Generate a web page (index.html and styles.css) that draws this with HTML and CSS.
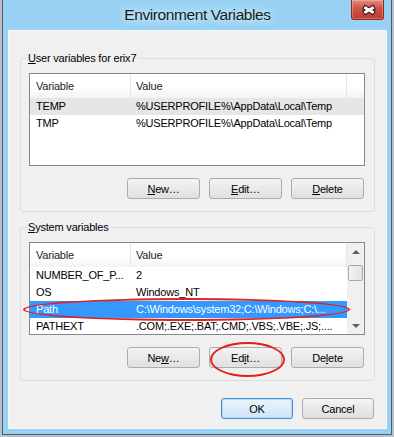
FILE: index.html
```html
<!DOCTYPE html>
<html lang="en">
<head>
    <meta charset="UTF-8">
    <title>Environment Variables</title>
    <link rel="stylesheet" href="styles.css">
</head>
<body>
    <div class="window">
        <div class="titlebar">
            <h1 class="title">Environment Variables</h1>
            <button class="close" type="button" aria-label="Close">
                <svg width="33" height="20" viewBox="0 0 33 20">
                    <path d="M14.5 9 L21.5 13 M21.5 9 L14.5 13" stroke="#3b1714" stroke-width="5" stroke-linecap="square" fill="none"/>
                    <path d="M14.5 9 L21.5 13 M21.5 9 L14.5 13" stroke="#fff" stroke-width="2.8" stroke-linecap="square" fill="none"/>
                </svg>
            </button>
        </div>

        <div class="client">
            <fieldset class="group">
                <legend><u>U</u>ser variables for erix7</legend>
                <div class="list">
                    <div class="list-main">
                        <div class="list-head cols cols-wide">
                            <div class="cell">Variable</div>
                            <div class="cell">Value</div>
                            <div class="cell"></div>
                        </div>
                        <div class="row cols sel-idle">
                            <div class="cell">TEMP</div>
                            <div class="cell">%USERPROFILE%\AppData\Local\Temp</div>
                        </div>
                        <div class="row cols">
                            <div class="cell">TMP</div>
                            <div class="cell">%USERPROFILE%\AppData\Local\Temp</div>
                        </div>
                    </div>
                </div>
                <div class="btn-row">
                    <button class="btn" type="button"><u>N</u>ew…</button>
                    <button class="btn" type="button"><u>E</u>dit…</button>
                    <button class="btn" type="button"><u>D</u>elete</button>
                </div>
            </fieldset>

            <fieldset class="group">
                <legend><u>S</u>ystem variables</legend>
                <div class="list">
                    <div class="list-main">
                        <div class="list-head cols">
                            <div class="cell">Variable</div>
                            <div class="cell">Value</div>
                        </div>
                        <div class="row cols">
                            <div class="cell">NUMBER_OF_P...</div>
                            <div class="cell">2</div>
                        </div>
                        <div class="row cols">
                            <div class="cell">OS</div>
                            <div class="cell">Windows_NT</div>
                        </div>
                        <div class="row cols sel">
                            <div class="cell">Path</div>
                            <div class="cell">C:\Windows\system32;C:\Windows;C:\...</div>
                        </div>
                        <div class="row cols">
                            <div class="cell">PATHEXT</div>
                            <div class="cell">.COM;.EXE;.BAT;.CMD;.VBS;.VBE;.JS;....</div>
                        </div>
                    </div>
                    <div class="scrollbar">
                        <div class="sb-btn"><span class="arrow-up"></span></div>
                        <div class="sb-track"><div class="sb-thumb"></div></div>
                        <div class="sb-btn"><span class="arrow-down"></span></div>
                    </div>
                </div>
                <div class="btn-row">
                    <button class="btn" type="button">Ne<u>w</u>…</button>
                    <button class="btn" type="button">Ed<u>i</u>t…</button>
                    <button class="btn" type="button">De<u>l</u>ete</button>
                </div>
            </fieldset>

            <div class="dialog-buttons">
                <button class="btn btn-default" type="button">OK</button>
                <button class="btn" type="button">Cancel</button>
            </div>

            <!-- red annotation rings drawn over the dialog -->
            <div class="mark mark-path"></div>
            <div class="mark mark-edit"></div>
        </div>
    </div>
</body>
</html>
```

FILE: styles.css
```css
body {
    margin: 0;
    background-color: #b9c0c6;
    font-family: "Liberation Sans", Arial, sans-serif;
    font-size: 11px;
    letter-spacing: -0.2px;
    color: #000;
}
.window {
    box-sizing: border-box;
    width: 390px;
    height: 435px;
    margin-left: 2px;
    padding: 0 4px 5px 5px;
    background-color: #98d1f3;
    border: 1px solid #4f5d6a;
    border-top: 0;
    display: flex;
    flex-direction: column;
}
.titlebar {
    height: 30px;
    flex-shrink: 0;
    display: grid;
    grid-template-columns: 1fr auto 1fr;
    align-items: start;
}
.title {
    grid-column: 2;
    margin: 0;
    font-size: 15.5px;
    font-weight: normal;
    line-height: 30px;
    letter-spacing: -0.4px;
    color: #1b1b1b;
    text-shadow: 0 0 6px #d9effc, 0 0 10px #d9effc;
}
.close {
    grid-column: 3;
    justify-self: end;
    margin-right: 3px;
    width: 33px;
    height: 20px;
    padding: 0;
    border: 1px solid #8d2a22;
    border-top: 0;
    border-radius: 0 0 3px 3px;
    background: linear-gradient(#e48a80, #cf5247 45%, #c23a30);
    box-shadow: inset 0 0 0 1px rgba(255, 255, 255, 0.25);
}
.close svg {
    display: block;
    margin: -1px 0 0 -1px;
}
.client {
    position: relative;
    flex: 1;
    background-color: #f0f0f0;
    padding: 21px 12px 0;
    display: flex;
    flex-direction: column;
    box-shadow: inset 0 0 0 1px #f7f7f7;
}
.group {
    margin: 0;
    padding: 8px 9px 12px 8px;
    min-width: 0;
    border: 1px solid #d5dfe5;
    border-radius: 3px;
}
.group + .group {
    margin-top: 8px;
}
.group legend {
    padding: 0 2px;
    margin-left: -3px;
    line-height: 14px;
}
.list {
    box-sizing: border-box;
    height: 93px;
    border: 1px solid #828790;
    background-color: #fff;
    display: flex;
    overflow: hidden;
}
.list-main {
    flex: 1;
    min-width: 0;
}
.cols {
    display: grid;
    grid-template-columns: 101px 216px;
}
.cols-wide {
    grid-template-columns: 101px 216px 1fr;
}
.cell {
    white-space: nowrap;
    overflow: hidden;
    padding-left: 6px;
}
.cols .cell:nth-child(2) {
    padding-left: 5px;
}
.list-head {
    height: 24px;
    background: linear-gradient(#fff 55%, #f2f3f5);
}
.list-head .cell {
    line-height: 24px;
    border-right: 1px solid #e5e5e5;
    color: #1e1e1e;
}
.list-head .cell:last-child:empty {
    border-right: 0;
}
.row {
    height: 17px;
    line-height: 17px;
}
.sel-idle {
    background-color: #e6e6e6;
}
.sel {
    background-color: #3399ff;
    color: #fff;
}
.scrollbar {
    width: 17px;
    flex-shrink: 0;
    background-color: #f0f0f0;
    display: flex;
    flex-direction: column;
}
.sb-btn {
    height: 17px;
    display: flex;
    align-items: center;
    justify-content: center;
}
.arrow-up {
    border-left: 4px solid transparent;
    border-right: 4px solid transparent;
    border-bottom: 4px solid #606060;
}
.arrow-down {
    border-left: 4px solid transparent;
    border-right: 4px solid transparent;
    border-top: 4px solid #606060;
}
.sb-track {
    flex: 1;
}
.sb-thumb {
    height: 16px;
    margin: 5px 1px 0;
    box-sizing: border-box;
    border: 1px solid #a9a9a9;
    border-radius: 2px;
    background: linear-gradient(90deg, #f3f3f3, #e2e2e2);
}
.btn-row {
    display: flex;
    justify-content: flex-end;
    gap: 9px;
    margin-top: 12px;
    padding-right: 1px;
}
.btn {
    width: 73px;
    height: 21px;
    padding: 0;
    font: inherit;
    letter-spacing: inherit;
    color: #000;
    border: 1px solid #acacac;
    border-radius: 3px;
    background: linear-gradient(#f4f4f4, #e9e9e9 50%, #e0e0e0);
}
.dialog-buttons {
    display: flex;
    justify-content: flex-end;
    gap: 9px;
    margin-top: 17px;
    padding-right: 1px;
}
.dialog-buttons .btn {
    width: 72px;
}
.btn-default {
    border-color: #3c8fd6;
    background: linear-gradient(#eaf4fc, #dcecf9 50%, #cfe4f5);
    box-shadow: inset 0 0 0 1px #b7dbf6;
}
.mark {
    position: absolute;
    box-sizing: border-box;
    border: 2px solid #e2201f;
    border-radius: 50%;
    pointer-events: none;
}
.mark-path {
    left: 15px;
    top: 268px;
    width: 327px;
    height: 23px;
}
.mark-edit {
    left: 202px;
    top: 312px;
    width: 75px;
    height: 35px;
}
```
